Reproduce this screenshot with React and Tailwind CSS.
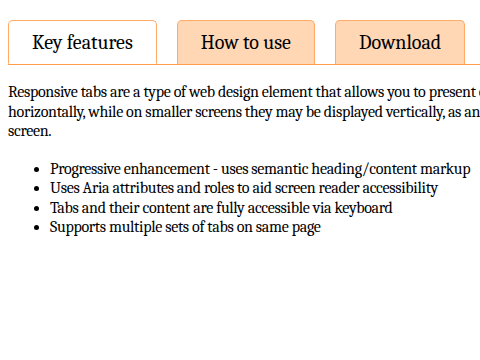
import React, { useState } from 'react';

const tabs = ['Key features', 'How to use', 'Download'];

const features = [
  'Progressive enhancement - uses semantic heading/content markup',
  'Uses Aria attributes and roles to aid screen reader accessibility',
  'Tabs and their content are fully accessible via keyboard',
  'Supports multiple sets of tabs on same page',
];

const App = () => {
  const [active, setActive] = useState(0);

  return (
    <div className="w-[480px] h-[360px] overflow-hidden bg-white text-black font-serif">
      <div className="pt-5 px-2 w-[760px]">
        <div className="flex gap-5 border-b border-[#ff9d4d]">
          {tabs.map((t, i) => (
            <button
              key={t}
              onClick={() => setActive(i)}
              className={
                i === active
                  ? 'shrink-0 whitespace-nowrap h-[44px] px-[23px] text-[20px] leading-[23px] border border-[#ffaa66] border-b-white -mb-px rounded-t-[5px] bg-white'
                  : 'shrink-0 whitespace-nowrap h-[44px] px-[23px] text-[20px] leading-[23px] border border-b-0 border-[#ffaa66] rounded-t-[5px] bg-[#ffd7b5]'
              }
            >
              {t}
            </button>
          ))}
        </div>
        <div className="pt-[18px] text-[16px] leading-[19.5px] tracking-[-0.3px]">
          <p className="whitespace-nowrap">
            Responsive tabs are a type of web design element that allows you to present content
            <br />
            horizontally, while on smaller screens they may be displayed vertically, as an accordion
            <br />
            screen.
          </p>
          <ul className="list-disc pl-[42px] mt-[18px] whitespace-nowrap">
            {features.map((f) => (
              <li key={f}>{f}</li>
            ))}
          </ul>
        </div>
      </div>
    </div>
  );
};

export default App;
